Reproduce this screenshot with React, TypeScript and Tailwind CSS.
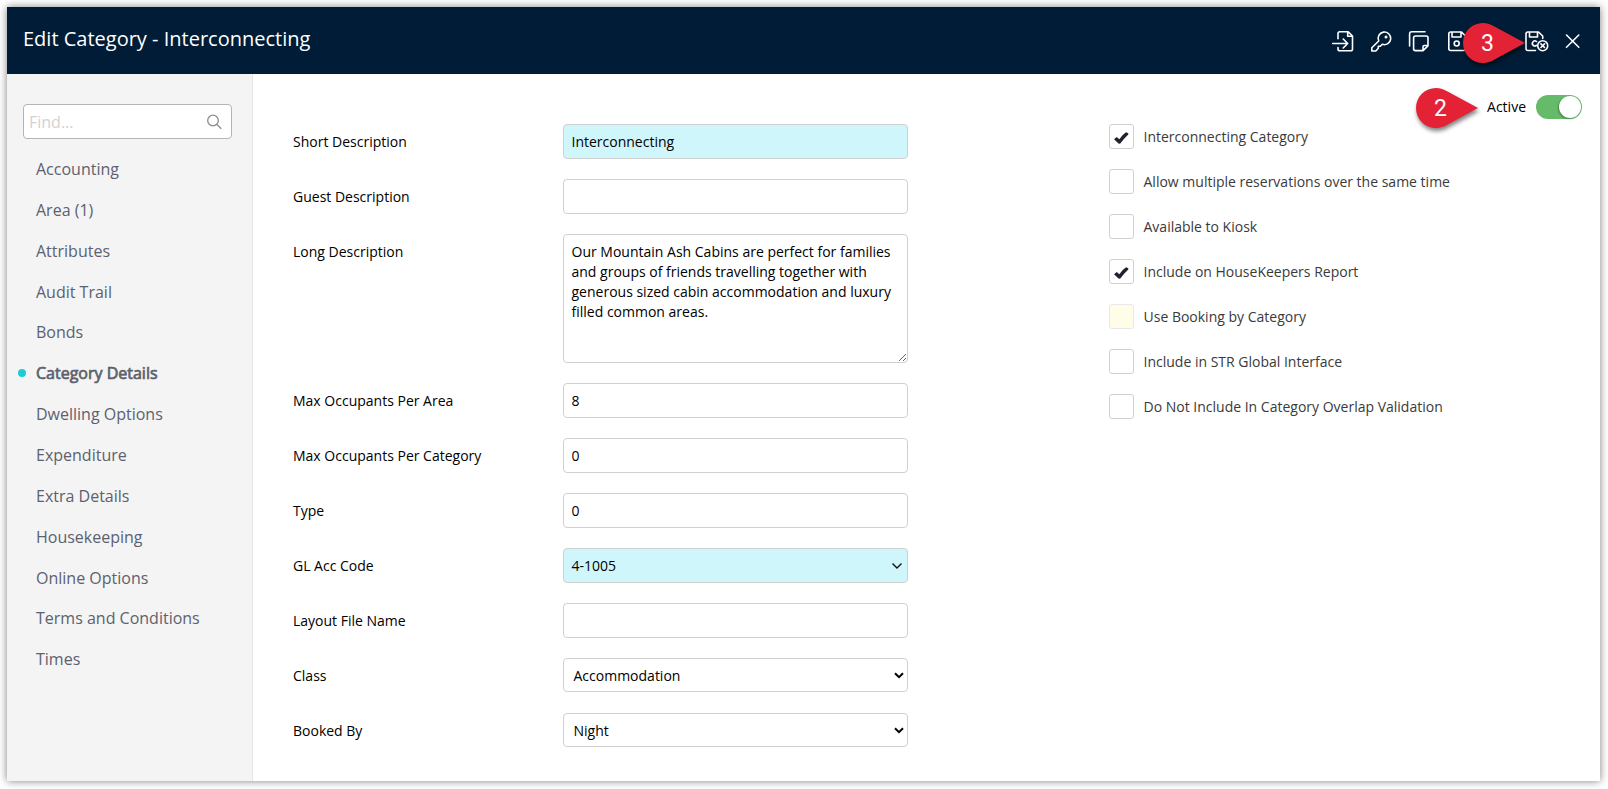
import { useState } from "react";
import type { ReactNode } from "react";

const navItems = [
  "Accounting",
  "Area (1)",
  "Attributes",
  "Audit Trail",
  "Bonds",
  "Category Details",
  "Dwelling Options",
  "Expenditure",
  "Extra Details",
  "Housekeeping",
  "Online Options",
  "Terms and Conditions",
  "Times",
];

const checkboxes = [
  { label: "Interconnecting Category", checked: true },
  { label: "Allow multiple reservations over the same time", checked: false },
  { label: "Available to Kiosk", checked: false },
  { label: "Include on HouseKeepers Report", checked: true },
  { label: "Use Booking by Category", checked: false, disabled: true },
  { label: "Include in STR Global Interface", checked: false },
  { label: "Do Not Include In Category Overlap Validation", checked: false },
];

const inputClass =
  "block h-[35px] w-[345px] rounded border border-[#d0d0d0] bg-white px-[7.5px] text-sm text-black outline-none";
const requiredClass =
  "block h-[35px] w-[345px] rounded border border-[#d0d0d0] bg-[#cff6fb] px-[7.5px] text-sm text-black outline-none";

function Icon({ children }: { children?: ReactNode }) {
  return (
    <svg
      width="24"
      height="24"
      viewBox="0 0 24 24"
      fill="none"
      stroke="currentColor"
      strokeWidth="1.6"
      strokeLinecap="round"
      strokeLinejoin="round"
      className="overflow-visible"
    >
      {children}
    </svg>
  );
}

function Pin({ n }: { n: number }) {
  return (
    <div className="relative h-10 w-[62px]">
      <svg
        width="62"
        height="40"
        viewBox="0 0 62 40"
        className="overflow-visible drop-shadow-[1px_3px_2px_rgba(0,0,0,0.5)]"
      >
        <path
          d="M62 20 L32 3.8 Q26 0 20 0 A20 20 0 0 0 20 40 Q26 40 32 36.2 Z"
          fill="#e32236"
        />
      </svg>
      <span className="absolute top-px left-0 w-[49px] text-center font-['Roboto',sans-serif] text-[23px] leading-10 text-white">
        {n}
      </span>
    </div>
  );
}

function Row({ label, children }: { label: string; children: ReactNode }) {
  return (
    <div className="flex items-start">
      <label className="w-[270px] pt-2 text-sm text-black">{label}</label>
      {children}
    </div>
  );
}

function Select({ value }: { value: string }) {
  return (
    <div className="mb-px flex h-[34px] w-[345px] items-center justify-between rounded border border-[#d0d0d0] bg-white pr-[3px] pl-[9.5px] text-sm">
      <span className="pt-px">{value}</span>
      <svg width="10" height="7" viewBox="0 0 10 7" fill="none" stroke="#000" strokeWidth="2">
        <path d="M1 1.2 L5 5.2 L9 1.2" />
      </svg>
    </div>
  );
}

export default function App() {
  const [active, setActive] = useState("Category Details");
  const [enabled, setEnabled] = useState(true);

  return (
    <div className="h-[789px] w-[1608px] overflow-hidden bg-white p-[7px] pb-2 font-['Open_Sans',sans-serif]">
      <div className="relative flex h-[774px] w-[1593px] flex-col bg-white shadow-[0_0_8px_rgba(0,0,0,0.5)]">
        <header className="flex h-[67px] shrink-0 items-center justify-between bg-[#001c36] pr-[14px] pl-4 text-white">
          <h1 className="pb-[3px] text-xl">Edit Category - Interconnecting</h1>
          <div className="flex items-center gap-[14.4px] pt-px">
            <Icon>
              <path d="M6 9.800V4.500Q6 2.700 7.800 2.700H16.200L20.500 7V20Q20.500 21.800 18.700 21.800H7.800Q6 21.800 6 20V18.500M15.700 2.700V7.300H20.500M0.700 14.500H15.700M11.200 10L15.700 14.500L11.200 19" />
            </Icon>
            <Icon>
              <path d="M8.700 12A6.300 6.300 0 1 1 12.300 15.300L10.300 17.300H8.300V19.300L5.800 22H1.800V18.800Z" />
              <circle cx="16" cy="8" r="0.700" />
            </Icon>
            <Icon>
              <path d="M1.600 17V5Q1.600 2.800 3.800 2.800H17M7.500 7H18.300Q20 7 20 8.700V16.800L15 21.600H7.500Q5.600 21.600 5.600 19.800V8.800Q5.600 7 7.500 7ZM20 16.500H16.500Q15 16.500 15 18V21.600" />
            </Icon>
            <Icon>
              <path d="M1.800 5Q1.800 3 3.800 3H14.500L18.500 7V19.500Q18.500 21.500 16.500 21.500H3.800Q1.800 21.500 1.800 19.500ZM5 3V8H14V3" />
              <circle cx="9.700" cy="14.500" r="2.500" />
            </Icon>
            <Icon />
            <Icon>
              <path d="M11.500 21.500H4Q2 21.500 2 19.500V5Q2 3 4 3H14.500L18.700 7V9.500M5.500 3V8H13.500V3M12.500 12.500A2.500 2.500 0 1 0 12.500 16.300" />
              <circle cx="18.700" cy="16.700" r="5" />
              <path d="M16.900 14.900L20.500 18.500M20.500 14.900L16.900 18.500" />
            </Icon>
            <Icon>
              <path d="M4.500 6L16.800 18.300M16.800 6L4.500 18.300" />
            </Icon>
          </div>
        </header>

        <div className="flex flex-1">
          <aside className="w-[246px] border-r border-[#e6e6e6] bg-[#f4f4f4] pt-[30px]">
            <div className="ml-4 flex h-[35px] w-[209px] items-center justify-between rounded border border-[#b4b4b4] bg-white pr-[9px] pl-[5px]">
              <input
                placeholder="Find..."
                className="w-40 text-base outline-none placeholder:text-[#d2d2d2]"
              />
              <svg width="15" height="15" viewBox="0 0 15 15" fill="none" stroke="#8c8c8c" strokeWidth="1.3">
                <circle cx="6" cy="6.500" r="5.300" />
                <path d="M10 10.500L14.300 14.800" />
              </svg>
            </div>
            <nav className="pt-[9.6px]">
              {navItems.map((item) => (
                <button
                  key={item}
                  onClick={() => setActive(item)}
                  className="flex h-[40.86px] w-full items-center pl-[11px] text-base text-[#5c616f]"
                >
                  <span
                    className={
                      item === active
                        ? "mr-2.5 size-2 rounded-full bg-[#1bcbd6]"
                        : "mr-2.5 size-2"
                    }
                  />
                  <span className={item === active ? "[-webkit-text-stroke:0.7px_#5c616f]" : ""}>
                    {item}
                  </span>
                </button>
              ))}
            </nav>
          </aside>

          <main className="flex flex-1 items-start pt-[50px] pl-10">
            <div className="flex flex-col gap-5">
              <Row label="Short Description">
                <input className={requiredClass} defaultValue="Interconnecting" />
              </Row>
              <Row label="Guest Description">
                <input className={inputClass} />
              </Row>
              <Row label="Long Description">
                <textarea
                  className="block h-[129px] w-[345px] rounded border border-[#d0d0d0] px-[7.5px] py-[7px] text-sm leading-5 text-black outline-none"
                  defaultValue="Our Mountain Ash Cabins are perfect for families and groups of friends travelling together with generous sized cabin accommodation and luxury filled common areas."
                />
              </Row>
              <Row label="Max Occupants Per Area">
                <input className={inputClass} defaultValue="8" />
              </Row>
              <Row label="Max Occupants Per Category">
                <input className={inputClass} defaultValue="0" />
              </Row>
              <Row label="Type">
                <input className={inputClass} defaultValue="0" />
              </Row>
              <Row label="GL Acc Code">
                <div className="flex h-[35px] w-[345px] items-center justify-between rounded border border-[#d0d0d0] bg-[#cff6fb] pr-[5px] pl-[7.5px] text-sm">
                  4-1005
                  <svg width="10" height="7" viewBox="0 0 10 7" fill="none" stroke="#111" strokeWidth="1.400">
                    <path d="M0.500 1.500L5 6L9.500 1.500" />
                  </svg>
                </div>
              </Row>
              <Row label="Layout File Name">
                <input className={inputClass} />
              </Row>
              <Row label="Class">
                <Select value="Accommodation" />
              </Row>
              <Row label="Booked By">
                <Select value="Night" />
              </Row>
            </div>

            <div className="ml-[201px] flex flex-col gap-5">
              {checkboxes.map((c) => (
                <label key={c.label} className="flex h-[25px] items-center gap-[9.5px] text-sm text-[#3a3a3a]">
                  <span
                    className={
                      c.disabled
                        ? "flex size-[25px] items-center justify-center rounded-[3px] border border-[#e8e8e8] bg-[#fffde7]"
                        : "flex size-[25px] items-center justify-center rounded-[3px] border border-[#d0d0d0] bg-white"
                    }
                  >
                    {c.checked && (
                      <svg width="15" height="13" viewBox="0 0 15 13" fill="#20232e" className="translate-y-px">
                        <path d="M0 8.300L2.800 6L5.300 8.200Q8.300 3.800 12 1.300L14.300 2.200V3.500Q10 7.500 6.300 12.500L4.800 12.800Z" />
                      </svg>
                    )}
                  </span>
                  {c.label}
                </label>
              ))}
            </div>
          </main>
        </div>

        <div className="absolute top-[16px] left-[1456px]">
          <Pin n={3} />
        </div>
        <div className="absolute top-[81px] right-[18px] flex items-start">
          <Pin n={2} />
          <span className="mr-[10px] ml-[9px] pt-[9px] text-sm text-black">Active</span>
          <button
            onClick={() => setEnabled(!enabled)}
            className={
              enabled
                ? "mt-[7px] flex h-6 w-[46px] items-center justify-end rounded-full bg-[#66bb6a] px-px"
                : "mt-[7px] flex h-6 w-[46px] items-center justify-start rounded-full bg-gray-300 px-px"
            }
          >
            <span className="size-[22px] rounded-full bg-white shadow-[-1px_1px_2px_rgba(0,0,0,0.3)]" />
          </button>
        </div>
      </div>
    </div>
  );
}
